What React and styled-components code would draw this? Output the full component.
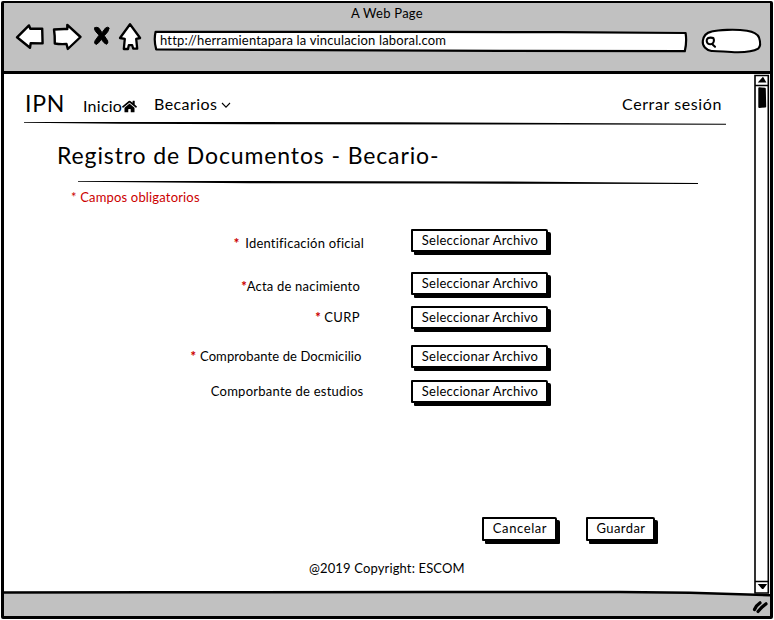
import React from 'react';
import styled, { createGlobalStyle } from 'styled-components';
import { FaHome } from 'react-icons/fa';

const GlobalStyle = createGlobalStyle`
  * { box-sizing: border-box; }
  body {
    margin: 0;
    background: #fff;
    color: #000;
    font-family: Lato, "Open Sans", sans-serif;
    font-size: 13px;
    line-height: 16px;
    font-variant-ligatures: none;
  }
  svg { display: block; flex: none; }
`;

const Screen = styled.div`
  width: 774px;
  height: 620px;
  padding: 1px;
  overflow: hidden;
`;

const Window = styled.div`
  display: flex;
  flex-direction: column;
  height: 618px;
  border: 3px solid #000;
  border-top-width: 2px;
  border-radius: 2px;
`;

const Header = styled.header`
  flex: none;
  height: 71px;
  padding-top: 2px;
  background: #c1c1c1;
  border-bottom: 3px solid #000;
`;

const Text = styled.span`
  white-space: pre;
  letter-spacing: ${(p) => p.$spacing || 0}px;
`;

const WindowTitle = styled.div`
  text-align: center;
`;

const Toolbar = styled.div`
  display: flex;
  height: 40px;
  padding: 0 4px 0 10px;
`;

const Sketch = styled.svg`
  fill: #fff;
  stroke: #000;
  stroke-width: ${(p) => p.$weight || 2.2};
  stroke-linejoin: round;
  stroke-linecap: round;
`;

const AddressBar = styled.div`
  display: grid;
  margin: 0 8px 0 6px;
  > * { grid-area: 1 / 1; }
`;

const Address = styled.div`
  padding: 11px 0 0 8px;
`;

const Body = styled.div`
  display: flex;
  flex: 1;
  min-height: 0;
`;

const Page = styled.main`
  display: flex;
  flex-direction: column;
  flex: 1;
`;

const Nav = styled.nav`
  display: flex;
  align-items: flex-start;
  height: 47px;
  padding: 15px 32px 0 21px;
  font-size: 16px;
  line-height: 20px;
`;

const Brand = styled.div`
  width: 58px;
  font-size: 23px;
  line-height: 28px;
`;

const NavItem = styled.div`
  display: flex;
  align-items: center;
  gap: ${(p) => p.$gap || 0}px;
  margin-top: ${(p) => p.$top}px;
  margin-left: ${(p) => (p.$end ? 'auto' : 0)};
  width: ${(p) => (p.$width ? `${p.$width}px` : 'auto')};
`;

const Rule = styled.svg`
  margin-left: ${(p) => p.$indent}px;
  fill: #000;
`;

const Title = styled.h1`
  margin: 16px 0 10px 53px;
  font-size: 23px;
  line-height: 28px;
  font-weight: 400;
`;

const Required = styled.p`
  margin: 5px 0 24px 67px;
  color: #cc0000;
`;

const Form = styled.form`
  display: flex;
  flex-direction: column;
`;

const Field = styled.div`
  display: grid;
  grid-template-columns: 407px auto;
  justify-content: start;
  height: ${(p) => p.$height}px;
`;

const Label = styled.label`
  display: flex;
  justify-content: flex-end;
  height: 16px;
  margin-top: ${(p) => p.$top}px;
  padding-right: ${(p) => p.$right}px;
`;

const Star = styled.span`
  margin-right: ${(p) => p.$gap}px;
  color: #cc0000;
  font-weight: 900;
`;

const Button = styled.button`
  display: flex;
  justify-content: center;
  width: ${(p) => p.$width}px;
  height: ${(p) => p.$height || 23}px;
  padding: 1px 0 0 1px;
  border: 2px solid #000;
  border-radius: 1px 2px 1px 1px;
  background: #fff;
  box-shadow: 3px 3px 0 #000;
  color: inherit;
  font: inherit;
`;

const Actions = styled.div`
  display: flex;
  gap: 29px;
  margin: auto 0 19px 478px;
`;

const Copyright = styled.footer`
  margin: 0 0 13px 305px;
`;

const Scrollbar = styled.div`
  flex: none;
  width: 16px;
`;

const StatusBar = styled.footer`
  display: flex;
  flex: none;
  justify-content: flex-end;
  height: 27px;
  background: #c1c1c1;
`;

const fields = [
  { label: 'Identificación oficial', spacing: 0.22, star: 6, right: 47, top: 6, height: 43 },
  { label: 'Acta de nacimiento', spacing: 0.2, star: 0, right: 51, top: 6, height: 34 },
  { label: 'CURP', spacing: 0.4, star: 3.5, right: 51, top: 3, height: 39 },
  { label: 'Comprobante de Docmicilio', spacing: 0.1, star: 4, right: 49.5, top: 3, height: 35 },
  { label: 'Comporbante de estudios', spacing: 0.25, star: null, right: 47.5, top: 3, height: 26 },
];

function BrowserHeader() {
  return (
    <Header>
      <WindowTitle><Text $spacing={0.25}>A Web Page</Text></WindowTitle>
      <Toolbar>
        <Sketch width="34" height="40" viewBox="14 21 34 40" $weight="2.4">
          <path d="M17 37.3 29 25.4 30.3 28.8 42.2 28.6 42.6 43.4 30.7 43.1 30 47.8Z" />
        </Sketch>
        <Sketch width="38" height="40" viewBox="48 21 38 40" $weight="2.4">
          <path d="M54 29.5Q60 28.8 67.3 29L67.3 24.9 80.5 37 67.8 49 66.5 44Q60 44.5 54.8 43.5 55 36 54 29.5Z" />
        </Sketch>
        <Sketch width="30" height="40" viewBox="86 21 30 40" $weight="1">
          <path
            fill="#000"
            d="M94.8 27.8Q97 26.4 99 28.2L102 32.7 105.5 28Q108 26.4 109.2 28 108.8 31.5 104.3 35.7L107.7 40.8Q108.5 43.5 106.5 44.3 104 43.5 101.3 39.3 98.5 43.8 96 44.5 93.8 43.5 95 40.8L99 35.2 95.5 31.3Q93.8 29 94.8 27.8Z"
          />
        </Sketch>
        <Sketch width="30" height="40" viewBox="116 21 30 40" $weight="2.3">
          <path d="M130 24.3 140.1 38 136.2 38.8 137.2 48.6 133.2 48.7 132.2 45.2 128.8 45.2 128 49 123.8 49 124.8 38.8 120 38Z" />
        </Sketch>
        <AddressBar>
          <Sketch width="538" height="40" viewBox="152 21 538 40">
            <path d="M155.6 31.8 430 31.8 560 32.2 685.6 33Q687 42 684.8 51.2L500 50.8 156.2 49.4Q153.6 40 155.6 31.8Z" />
          </Sketch>
          <Address><Text $spacing={0.16}>http://herramientapara la vinculacion laboral.com</Text></Address>
        </AddressBar>
        <Sketch width="66" height="40" viewBox="698 21 66 40" $weight="2.1">
          <path d="M702.8 40.8C703.5 36 707 32.5 711.5 31.6 718 30 735 28.8 747 30.8 753 31.8 757.5 34 759 37.5 760.5 42 760.6 46.5 758.2 48.6 754 51 746 52.2 738 52.2 728 52.3 719 50.8 711.5 51 706 50 702.2 46 702.8 40.8Z" />
          <path d="M707 39.2C708 37 713.5 37.3 713.8 39 714.4 42 713 44.3 710.2 44.3 707.5 44.4 706 41.7 707 39.2ZM712 44 715 46.7" />
        </Sketch>
      </Toolbar>
    </Header>
  );
}

function PageNav() {
  return (
    <Nav>
      <Brand><Text $spacing={0.8}>IPN</Text></Brand>
      <NavItem $top={7} $width={71}>
        <Text $spacing={0.25}>Inicio</Text>
        <FaHome size={15} />
      </NavItem>
      <NavItem $top={5} $gap={4}>
        <Text $spacing={0.43}>Becarios</Text>
        <svg width="10" height="7" viewBox="0 0 10 7" fill="none" stroke="#000" strokeWidth="1.1">
          <path d="M1 2 5 6.2 9 2" />
        </svg>
      </NavItem>
      <NavItem $top={5} $end>
        <Text $spacing={0.6}>Cerrar sesión</Text>
      </NavItem>
    </Nav>
  );
}

function PageScrollbar() {
  return (
    <Scrollbar>
      <svg width="16" height="515" viewBox="754 74 16 515" fill="none" stroke="#000" strokeWidth="1.6">
        <path d="M755 589V75.5H768.3V589M755 85.5H768.3M755 581.5H768.3" />
        <path d="M762.8 78 765 81.8H759.5ZM759.5 584.8H765.5L762.7 588.5Z" fill="#000" />
        <path d="M759.3 88.3 764.8 88.8 765.2 106.5 759.3 107Z" fill="#000" strokeWidth="2" strokeLinejoin="round" />
      </svg>
    </Scrollbar>
  );
}

export default function App() {
  return (
    <>
      <GlobalStyle />
      <Screen>
        <Window>
          <BrowserHeader />
          <Body>
            <Page>
              <PageNav />
              <Rule $indent={20} width="702" height="4" viewBox="24 121 702 4">
                <path d="M24 122 130 122 400 122.2 726 123.8V124.8L560 124.6 250 124.2 120 123.8 24 122.8Z" />
              </Rule>
              <Title><Text $spacing={0.88}>Registro de Documentos - Becario-</Text></Title>
              <Rule $indent={74} width="620" height="5" viewBox="78 179 620 5">
                <path d="M78 181 240 181 500 181.4 698 183V184L450 183.6 250 183.2 78 181.8Z" />
              </Rule>
              <Required><Text $spacing={0.17}>* Campos obligatorios</Text></Required>
              <Form>
                {fields.map((f) => (
                  <Field key={f.label} $height={f.height}>
                    <Label $top={f.top} $right={f.right}>
                      {f.star !== null && <Star $gap={f.star}>*</Star>}
                      <Text $spacing={f.spacing}>{f.label}</Text>
                    </Label>
                    <Button type="button" $width={137}>
                      <Text $spacing={0.27}>Seleccionar Archivo</Text>
                    </Button>
                  </Field>
                ))}
              </Form>
              <Actions>
                <Button type="button" $width={75} $height={24}><Text $spacing={0.6}>Cancelar</Text></Button>
                <Button type="button" $width={69} $height={24}><Text $spacing={0.4}>Guardar</Text></Button>
              </Actions>
              <Copyright><Text $spacing={0.14}>@2019 Copyright: ESCOM</Text></Copyright>
            </Page>
            <PageScrollbar />
          </Body>
          <StatusBar>
            <svg width="766" height="27" viewBox="4 589 766 27">
              <path d="M4 589H770V595L690 592 4 592Z" fill="#fff" />
              <path d="M4 592.5 150 592.3 430 592 620 592 690 592.8 770 595.2" fill="none" stroke="#000" strokeWidth="2.6" />
              <path d="M755 589V593H768.3V589" fill="#fff" stroke="#000" strokeWidth="1.6" />
              <path d="M759.5 584.8H765.5L762.7 588.5Z" fill="#000" />
              <path d="M754.5 609.5Q756.5 605 760 602.8M758 611.5Q762 606.5 766 603.8" fill="none" stroke="#000" strokeWidth="3.2" strokeLinecap="round" />
            </svg>
          </StatusBar>
        </Window>
      </Screen>
    </>
  );
}
